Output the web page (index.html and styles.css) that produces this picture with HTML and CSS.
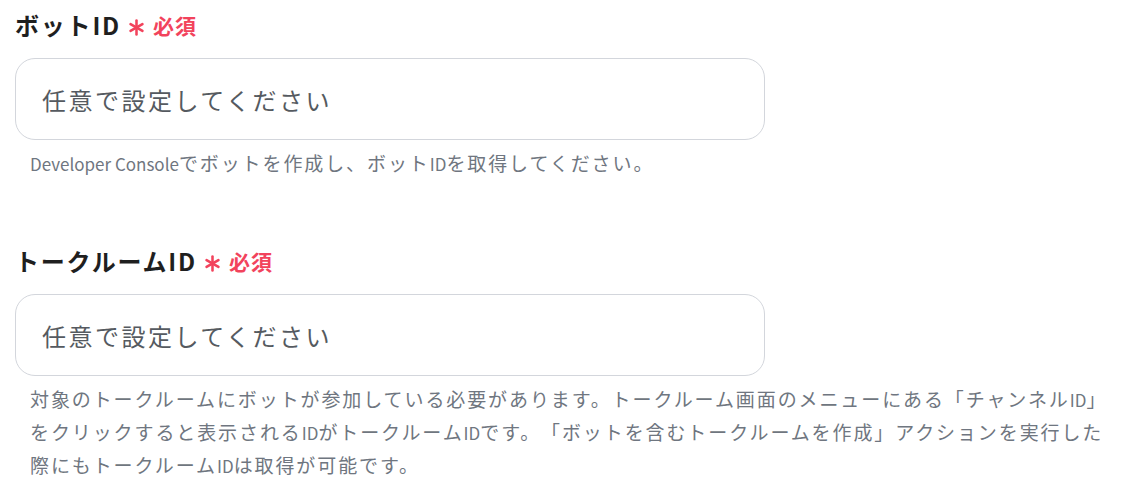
FILE: index.html
```html
<!DOCTYPE html>
<html lang="ja">
<head>
<meta charset="utf-8">
<link rel="stylesheet" href="styles.css">
</head>
<body>
<div class="form">
  <div class="field">
    <div class="label">ボットID<span class="req"><svg class="star" viewBox="0 0 16 16" width="17" height="17"><g stroke="currentColor" stroke-width="2.4" stroke-linecap="round"><line x1="8" y1="1.5" x2="8" y2="14.5"/><line x1="2.4" y1="4.75" x2="13.6" y2="11.25"/><line x1="2.4" y1="11.25" x2="13.6" y2="4.75"/></g></svg>必須</span></div>
    <input class="input" type="text" placeholder="任意で設定してください">
    <p class="help"><span class="en">Developer Console</span>でボットを作成し、ボット<span class="en">ID</span>を取得してください。</p>
  </div>
  <div class="field">
    <div class="label">トークルームID<span class="req"><svg class="star" viewBox="0 0 16 16" width="17" height="17"><g stroke="currentColor" stroke-width="2.4" stroke-linecap="round"><line x1="8" y1="1.5" x2="8" y2="14.5"/><line x1="2.4" y1="4.75" x2="13.6" y2="11.25"/><line x1="2.4" y1="11.25" x2="13.6" y2="4.75"/></g></svg>必須</span></div>
    <input class="input" type="text" placeholder="任意で設定してください">
    <p class="help">対象のトークルームにボットが参加している必要があります。トークルーム画面のメニューにある「チャンネル<span class="en">ID</span>」をクリックすると表示される<span class="en">ID</span>がトークルーム<span class="en">ID</span>です。「ボットを含むトークルームを作成」アクションを実行した際にもトークルーム<span class="en">ID</span>は取得が可能です。</p>
  </div>
</div>
</body>
</html>
```

FILE: styles.css
```css
html, body {
  margin: 0;
  padding: 0;
  background: #ffffff;
}
body {
  font-family: "Noto Sans CJK JP", "Noto Sans", sans-serif;
  color: #1f1f1f;
  text-spacing-trim: space-all;
}
.form {
  display: flex;
  flex-direction: column;
  gap: 66px;
  padding: 10px 0 0 15px;
}
.field {
  display: flex;
  flex-direction: column;
}
.label {
  display: flex;
  align-items: center;
  font-size: 24px;
  font-weight: 700;
  line-height: 30px;
  letter-spacing: 1.8px;
  color: #1f1f1f;
}
.req {
  display: flex;
  align-items: center;
  margin-left: 7px;
  color: #f2435c;
  font-size: 21px;
  font-weight: 700;
  letter-spacing: 1px;
}
.star {
  margin: 5px 8px 0 0;
}
.input {
  box-sizing: border-box;
  width: 750px;
  height: 82px;
  margin: 18px 0 0;
  padding: 0 26px;
  border: 1px solid #d3d6dc;
  border-radius: 20px;
  font-family: inherit;
  font-size: 24px;
  letter-spacing: 2.5px;
  outline: none;
  background: #fff;
}
.input::placeholder {
  color: #555a60;
}
.help {
  margin: 7px 0 0;
  padding-left: 15px;
  width: 1090px;
  font-size: 19px;
  line-height: 32px;
  letter-spacing: 1.9px;
  color: #6f7680;
}
.en {
  font-size: 17px;
  letter-spacing: 0;
}
```
